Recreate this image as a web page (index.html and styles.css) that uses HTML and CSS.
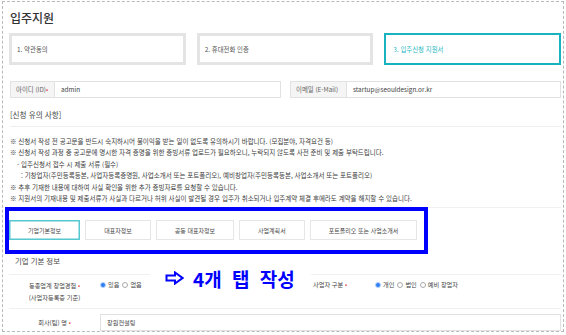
FILE: index.html
```html
<!DOCTYPE html>
<html lang="ko">
<head>
  <meta charset="UTF-8" />
  <meta name="viewport" content="width=device-width, initial-scale=1" />
  <title>입주지원 | 입주신청 지원서</title>
  <link rel="stylesheet" href="styles.css">
</head>
<body>
  <div class="page">
    <h1 class="page-title">입주지원</h1>

    <ol class="steps">
      <li class="step">1. 약관동의</li>
      <li class="step">2. 휴대전화 인증</li>
      <li class="step is-active">3. 입주신청 지원서</li>
    </ol>

    <div class="account">
      <div class="field">
        <span class="field-label">아이디 (ID)<i class="req">•</i></span>
        <span class="field-value">admin</span>
      </div>
      <div class="field">
        <span class="field-label field-label--wide">이메일 (E-Mail)</span>
        <span class="field-value">startup@seouldesign.or.kr</span>
      </div>
    </div>

    <section class="notice">
      <h2 class="notice-title">[신청 유의 사항]</h2>
      <ul class="notice-list">
        <li>※ 신청서 작성 전 공고문을 반드시 숙지하시어 불이익을 받는 일이 없도록 유의하시기 바랍니다. (모집분야, 자격요건 등)</li>
        <li>※ 신청서 작성 과정 중 공고문에 명시한 자격 증명을 위한 증빙서류 업로드가 필요하오니, 누락되지 않도록 사전 준비 및 제출 부탁드립니다.</li>
        <li class="sub">- 입주신청서 접수 시 제출 서류 (필수)</li>
        <li class="sub2">: 기창업자(주민등록등본, 사업자등록증명원, 사업소개서 또는 포트폴리오), 예비창업자(주민등록등본, 사업소개서 또는 포트폴리오)</li>
        <li>※ 추후 기재한 내용에 대하여 사실 확인을 위한 추가 증빙자료를 요청할 수 있습니다.</li>
        <li>※ 지원서의 기재내용 및 제출서류가 사실과 다르거나 허위 사실이 발견될 경우 입주가 취소되거나 입주계약 체결 후에라도 계약을 해지할 수 있습니다.</li>
      </ul>
    </section>

    <section class="apply">
      <div class="tabs">
        <button class="tab is-active">기업기본정보</button>
        <button class="tab">대표자정보</button>
        <button class="tab">공동 대표자정보</button>
        <button class="tab">사업계획서</button>
        <button class="tab">포트폴리오 또는 사업소개서</button>
      </div>

      <h3 class="apply-title">기업 기본 정보</h3>

      <div class="form-row">
        <div class="form-half">
          <div class="form-label">동종업계 창업경험 <i class="req">•</i><br>(사업자등록증 기준)</div>
          <div class="form-value">
            <span class="radio is-checked"></span>있음
            <span class="radio"></span>없음
          </div>
        </div>
        <div class="form-half form-half--right">
          <div class="form-label form-label--left">사업자 구분 <i class="req">•</i></div>
          <div class="form-value">
            <span class="radio is-checked"></span>개인
            <span class="radio"></span>법인
            <span class="radio"></span>예비 창업자
          </div>
        </div>
      </div>

      <div class="form-row form-row--input">
        <div class="form-label form-label--single">회사(팀) 명 <i class="req">•</i></div>
        <div class="form-input">창원컨설팅</div>
      </div>
    </section>

    <!-- annotation overlay -->
    <div class="mark-box"></div>
    <div class="mark-note">
      <svg class="mark-arrow" width="19" height="14" viewBox="0 0 19 14">
        <path d="M1.5 4.5 H10 V1.5 L17.5 7 L10 12.5 V9.5 H1.5 Z" fill="#fff" stroke="#0000ff" stroke-width="2" stroke-linejoin="miter"/>
      </svg>
      <span>4개 탭 작성</span>
    </div>
  </div>
</body>
</html>
```

FILE: styles.css
```css
*, *::before, *::after {
  box-sizing: border-box;
}
body {
  margin: 0;
  background: #fff;
  color: #444;
  font-family: 'Noto Sans CJK KR', 'Noto Sans', sans-serif;
}
.page {
  position: relative;
  margin: 1px 2px 0;
  border: 1px dashed #b9b9b9;
  padding: 0 2px 0 6px;
}
.req {
  font-style: normal;
  color: #e84545;
}

/* title + steps */
.page-title {
  margin: 8px 0 0 1px;
  font-size: 12px;
  line-height: 16px;
  font-weight: 500;
  color: #333;
}
.steps {
  list-style: none;
  margin: 7px 0 0;
  padding: 0;
  display: grid;
  grid-template-columns: repeat(3, 1fr);
  gap: 11px;
}
.step {
  height: 32px;
  border: 3px solid #e4e4e4;
  padding: 0 5px;
  display: flex;
  align-items: center;
  font-size: 6.4px;
  color: #555;
}
.step.is-active {
  border: 2px solid #19b3bf;
  padding-left: 7px;
  color: #25b7c2;
}

/* account fields */
.account {
  margin-top: 16px;
  display: grid;
  grid-template-columns: 1fr 1fr;
  gap: 9px;
  padding-left: 1px;
}
.field {
  display: flex;
  height: 17px;
  border: 1px solid #e2e2e2;
  font-size: 6.4px;
}
.field-label {
  width: 44px;
  flex: none;
  background: #f5f5f5;
  border-right: 1px solid #e2e2e2;
  display: flex;
  align-items: center;
  padding-left: 5px;
  color: #666;
}
.field-label--wide {
  width: 56px;
}
.field-value {
  display: flex;
  align-items: center;
  padding-left: 6px;
  color: #444;
}

/* notice */
.notice-title {
  margin: 11px 0 0 1px;
  padding-bottom: 5px;
  border-bottom: 1px solid #eeeeee;
  font-size: 7.6px;
  line-height: 12px;
  font-weight: 400;
  color: #444;
}
.notice-list {
  list-style: none;
  margin: 0;
  padding: 9px 0 3px 1px;
  font-size: 6.5px;
  line-height: 11.4px;
  color: #3a3a3a;
  white-space: nowrap;
}
.notice-list .sub {
  padding-left: 7px;
}
.notice-list .sub2 {
  padding-left: 11px;
}

/* tabs + form */
.apply {
  border-top: 1px solid #f0f0f0;
}
.tabs {
  display: flex;
  gap: 5px;
  padding-top: 12px;
}
.tab {
  height: 20px;
  padding: 0 18px;
  border: 1px solid #e6e6e6;
  background: #fff;
  font-family: inherit;
  font-size: 6px;
  color: #444;
}
.tab.is-active {
  border-color: #55c8d1;
  box-shadow: inset 0 0 0 0.5px #55c8d1;
}
.apply-title {
  margin: 15px 0 0 6px;
  font-size: 7.4px;
  line-height: 12px;
  font-weight: 400;
  color: #444;
}
.form-row {
  margin-top: 7px;
  border-top: 1px solid #f0f0f0;
  display: flex;
  height: 34px;
  font-size: 6.2px;
  color: #444;
}
.form-half {
  display: flex;
  width: 296px;
}
.form-half--right {
  flex: 1;
}
.form-label {
  width: 91px;
  flex: none;
  text-align: center;
  line-height: 11.5px;
  align-self: center;
}
.form-label--left {
  width: 70px;
  text-align: left;
  padding-left: 8px;
  align-self: flex-start;
  padding-top: 4px;
}
.form-value {
  display: flex;
  align-items: flex-start;
  padding-top: 6px;
  line-height: 8px;
  gap: 1px;
}
.radio {
  width: 6px;
  height: 6px;
  margin: 1px 1px 0 2px;
  border: 1px solid #aaa;
  border-radius: 50%;
}
.radio:first-child {
  margin-left: 0;
}
.radio.is-checked {
  border: 1.5px solid #b7d3ff;
  background: #2f7df2;
}
.form-row--input {
  margin-top: 0;
  height: auto;
  padding: 5px 0 0;
}
.form-label--single {
  align-self: center;
  line-height: 12px;
}
.form-input {
  flex: 1;
  height: 17px;
  border: 1px solid #e2e2e2;
  display: flex;
  align-items: center;
  padding-left: 6px;
}

/* annotation overlay */
.mark-box {
  position: absolute;
  left: 2px;
  top: 205px;
  width: 423px;
  height: 47px;
  border: 4px solid #0000ff;
}
.mark-note {
  position: absolute;
  left: 147px;
  top: 263px;
  width: 161px;
  height: 26px;
  background: #fff;
  display: flex;
  align-items: center;
  padding-left: 15px;
  gap: 9px;
  color: #0000ff;
  font-size: 19px;
  font-weight: 700;
  word-spacing: 5px;
}
.mark-arrow {
  flex: none;
}
```
